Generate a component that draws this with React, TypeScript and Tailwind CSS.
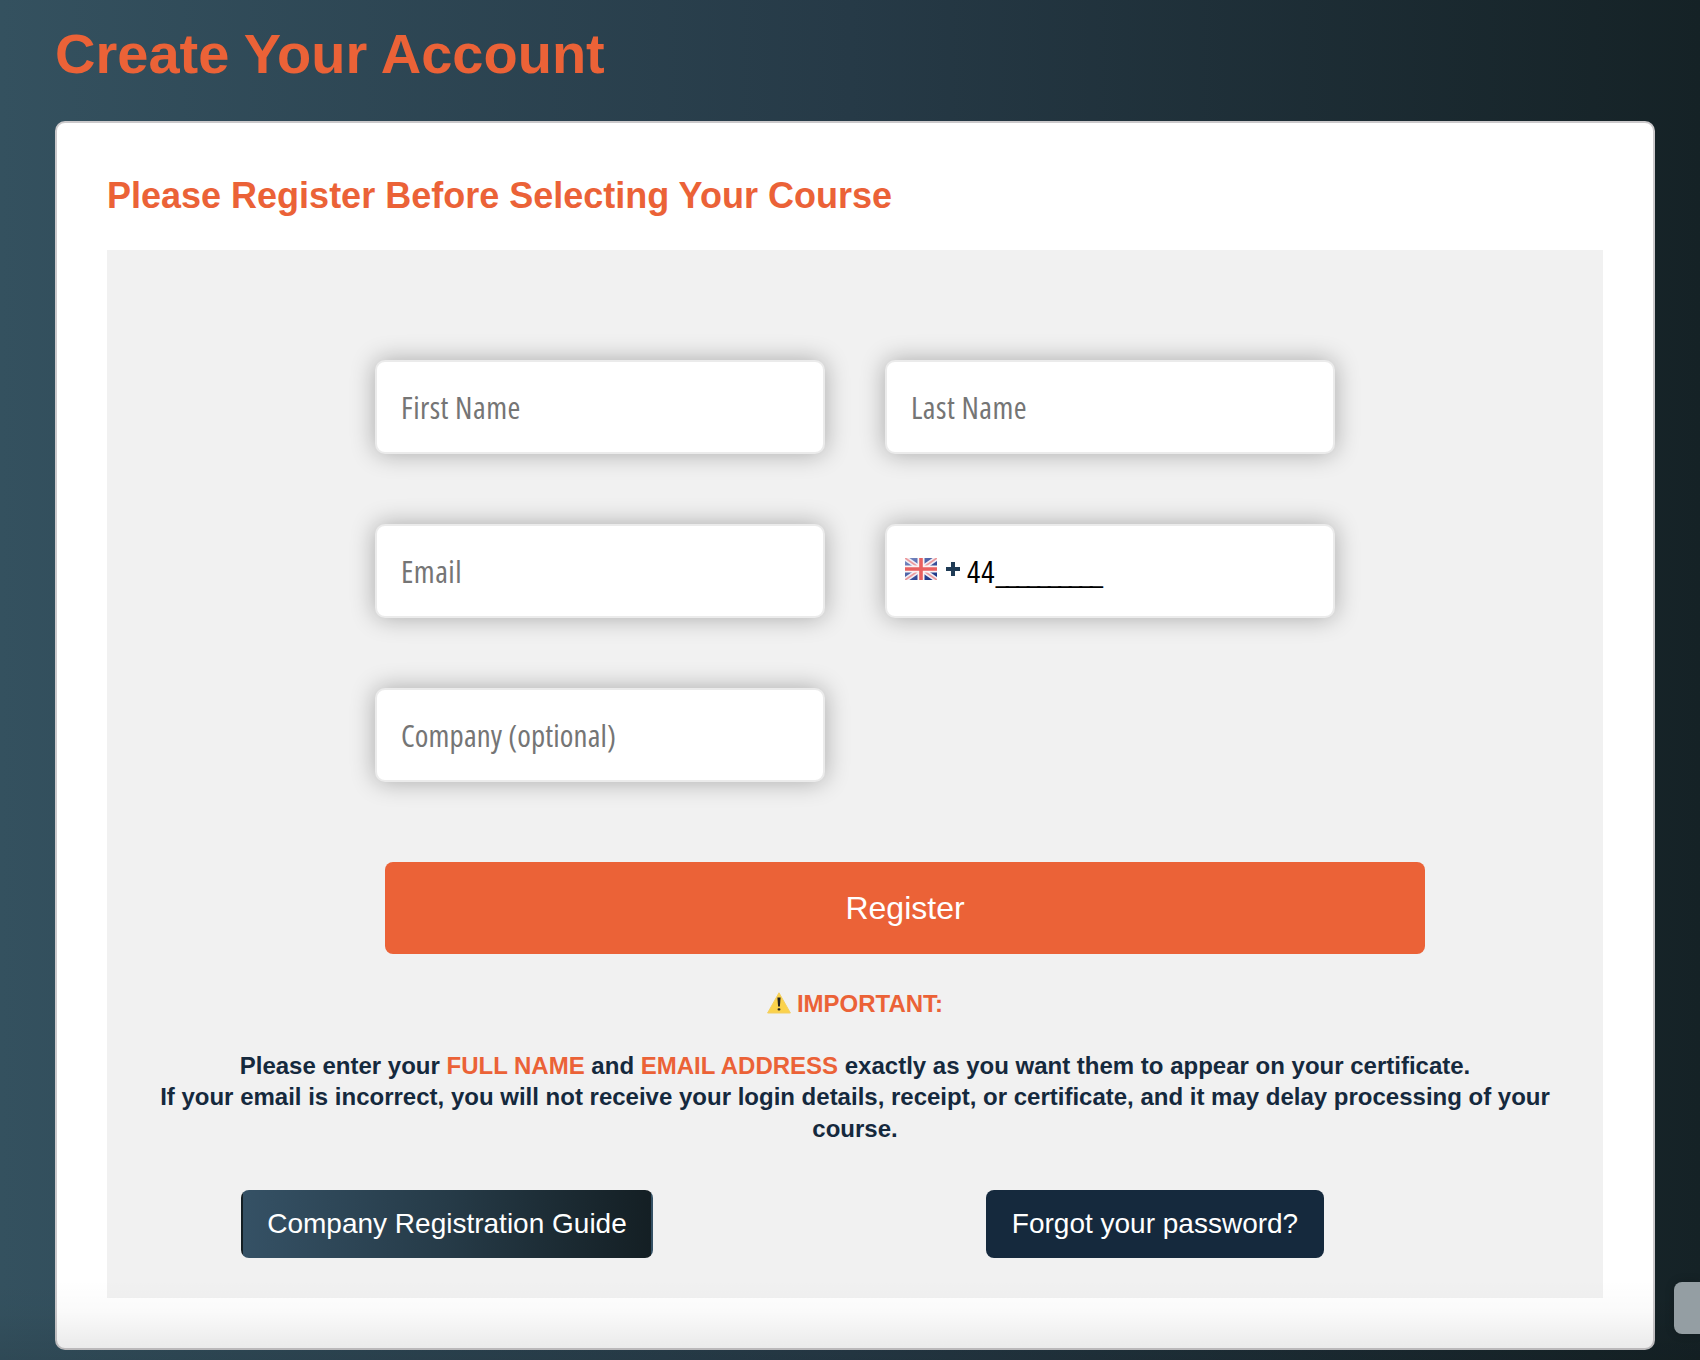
const guideLinks = "inline-flex h-[68px] items-center rounded-lg text-[28px] text-white";

const inputBox =
  "h-[94px] w-[450px] rounded-[10px] border-2 border-[#ebebeb] bg-white shadow-[0_0_25px_rgba(0,0,0,0.3)]";

const inputText =
  "font-['Open_Sans','Noto_Sans',sans-serif] text-[31px] font-medium [font-stretch:75%]";

const fieldNames = ["First Name", "Last Name", "Email"];

function Field({ label, tracking = "tracking-[0.45px]" }: { label: string; tracking?: string }) {
  return (
    <label className={`${inputBox} flex items-center pl-6`}>
      <span className={`${inputText} ${tracking} text-[#757575]`}>{label}</span>
    </label>
  );
}

function UkFlag() {
  return (
    <svg width="32" height="22" viewBox="0 0 32 22" className="mb-1">
      <defs>
        <linearGradient id="flagBlue" x1="0" y1="0" x2="1" y2="1">
          <stop offset="0" stopColor="#7f90c6" />
          <stop offset="0.5" stopColor="#4358a0" />
          <stop offset="1" stopColor="#0f2a7e" />
        </linearGradient>
      </defs>
      <rect width="32" height="22" fill="url(#flagBlue)" />
      <path d="M0 0l32 22M32 0L0 22" stroke="#f0edf5" strokeWidth="5" />
      <path d="M0 0l32 22M32 0L0 22" stroke="#ec9a9c" strokeWidth="1.8" />
      <path d="M16 0v22M0 11h32" stroke="#fbf3f4" strokeWidth="7" />
      <path d="M16 0v22M0 11h32" stroke="#e9605f" strokeWidth="3.6" />
    </svg>
  );
}

function WarningIcon() {
  return (
    <svg width="24" height="22" viewBox="0 0 24 22" className="mb-0.5">
      <path d="M12 .8L23.4 21H.6z" fill="#fbd24b" stroke="#f3cf62" strokeWidth="1" strokeLinejoin="round" />
      <path d="M10.4 5.5h3.2l-.7 9h-1.8z" fill="#222" />
      <rect x="10.6" y="16.2" width="2.8" height="2.4" rx="1" fill="#222" />
    </svg>
  );
}

export default function App() {
  return (
    <div className="relative h-[1360px] w-[1700px] overflow-hidden bg-linear-to-r from-[#34515f] via-[#263a47] to-[#152226] px-[55px] font-['Liberation_Sans',Arial,sans-serif]">
      <h1 className="pt-[22px] text-[56px] leading-[64px] font-bold text-[#eb6237]">
        Create Your Account
      </h1>

      <main className="mt-[35px] h-[1229px] w-[1600px] rounded-[10px] border-2 border-[#cbc9cb] bg-white px-[50px] pt-[50px]">
        <h2 className="text-[36px] leading-[46px] font-bold text-[#eb6237]">
          Please Register Before Selecting Your Course
        </h2>

        <section className="mt-[31px] h-[1048px] bg-[#f1f1f1] pt-[110px]">
          <form className="ml-[268px]">
            <div className="grid w-[960px] grid-cols-2 gap-x-[60px] gap-y-[70px]">
              {fieldNames.map((name) => (
                <Field key={name} label={name} />
              ))}
              <div className={`${inputBox} flex items-center pl-[18px]`}>
                <UkFlag />
                <svg width="14" height="14" viewBox="0 0 14 14" className="mb-1 ml-[9px]">
                  <path d="M7 0v14M0 7h14" stroke="#1f3b55" strokeWidth="4" />
                </svg>
                <span className={`${inputText} ml-[7px] tracking-[1px] text-black`}>44</span>
                <span className={`${inputText} pt-0.5 tracking-[-2.9px] text-black`}>__________</span>
              </div>
              <Field label="Company (optional)" tracking="tracking-[0.12px]" />
            </div>
            <button
              type="button"
              className="mt-20 ml-[10px] h-[92px] w-[1040px] rounded-lg bg-[#eb6237] text-[32px] text-white"
            >
              Register
            </button>
          </form>

          <div className="mt-[34px] text-center text-[24px] leading-[31.2px] font-bold text-[#15293d]">
            <p className="flex items-center justify-center gap-1.5 text-[#eb6237]">
              <WarningIcon />
              IMPORTANT:
            </p>
            <p className="mt-[31px] px-[50px]">
              Please enter your <span className="text-[#eb6237]">FULL NAME</span> and{" "}
              <span className="text-[#eb6237]">EMAIL ADDRESS</span> exactly as you want them to
              appear on your certificate.
              <br />
              If your email is incorrect, you will not receive your login details, receipt, or
              certificate, and it may delay processing of your course.
            </p>
          </div>

          <div className="mt-[46px] flex gap-[333px] pl-[134px]">
            <a
              className={`${guideLinks} w-[412px] justify-center border-2 border-transparent bg-linear-to-r from-[#355165] via-[#263b48] to-[#141f24]`}
            >
              Company Registration Guide
            </a>
            <a className={`${guideLinks} w-[338px] justify-center bg-[#15293d]`}>
              Forgot your password?
            </a>
          </div>
        </section>
      </main>

      <div className="absolute inset-x-0 bottom-0 h-20 bg-linear-to-b from-transparent via-black/2 via-40% to-black/10" />
      <div className="absolute top-[1282px] right-0 h-[52px] w-[26px] rounded-l-lg bg-[#949ea3] shadow-[0_0_10px_rgba(0,0,0,0.2)]" />
    </div>
  );
}
